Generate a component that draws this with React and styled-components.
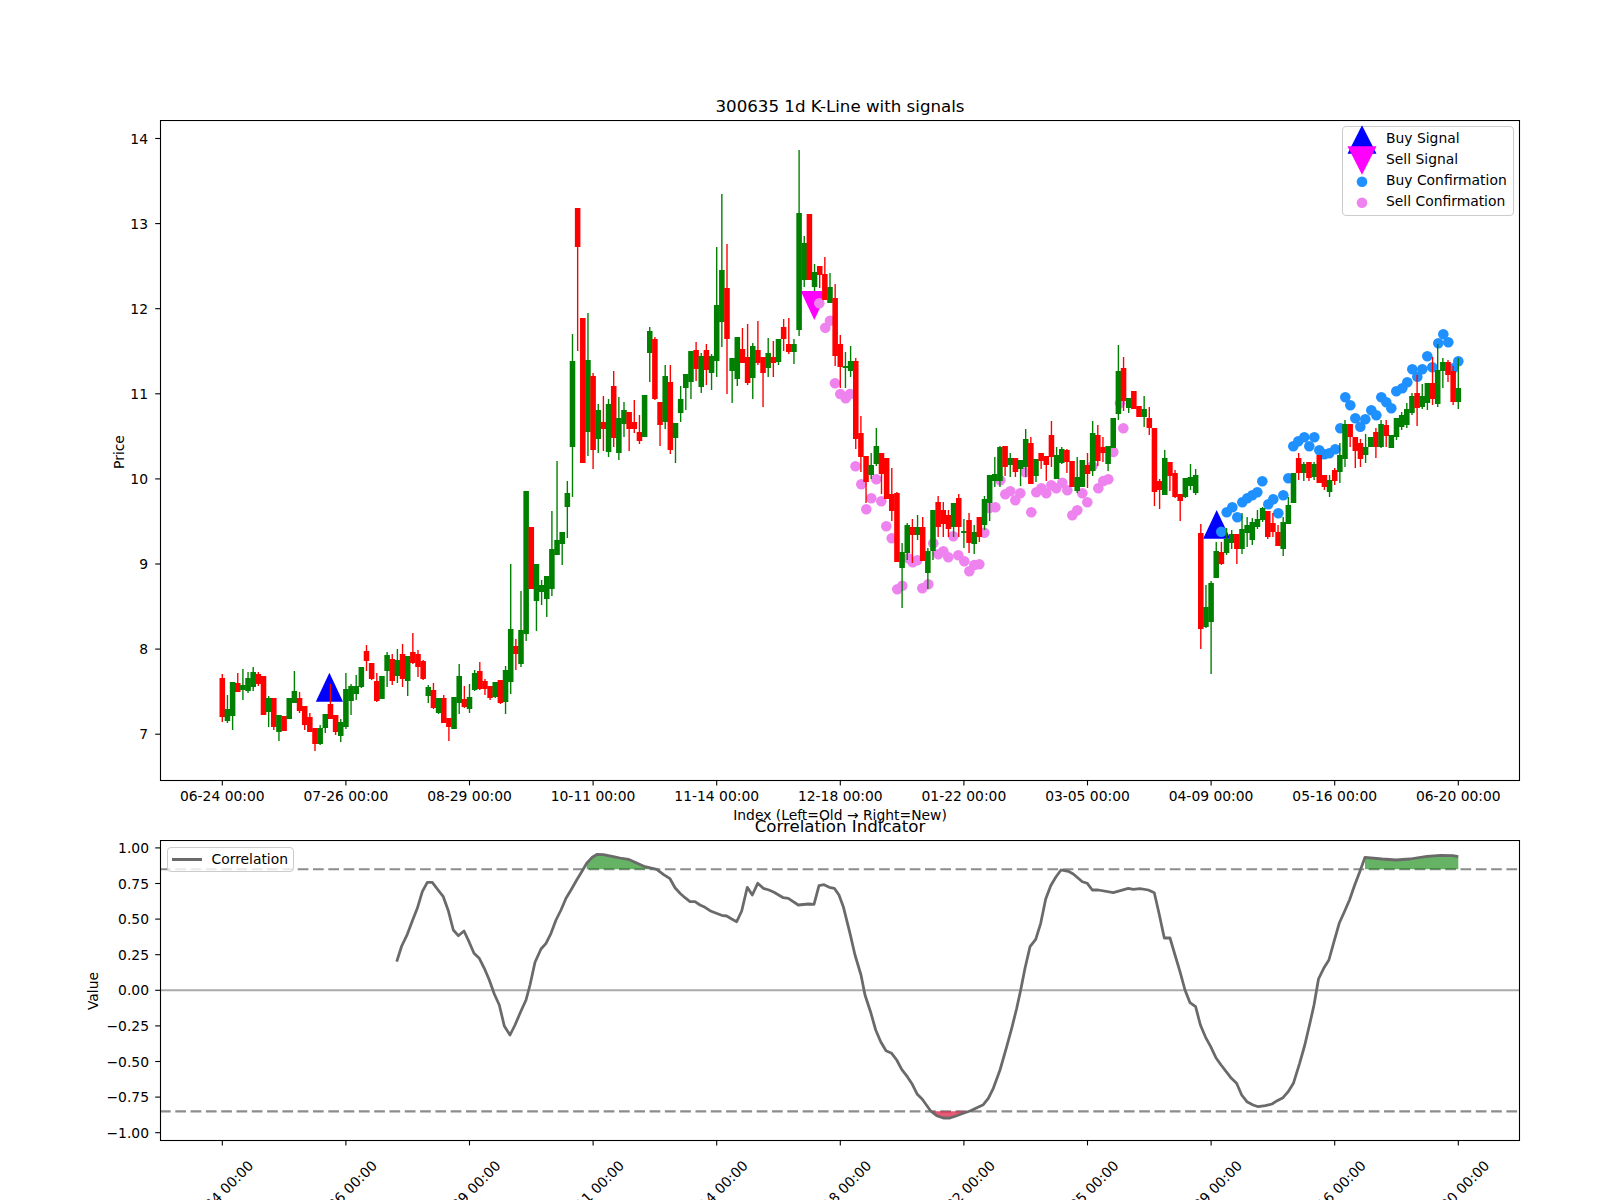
import React from 'react';
import styled, { createGlobalStyle } from 'styled-components';

const GlobalStyle = createGlobalStyle`
  html,
  body {
    margin: 0;
    background: #fff;
    font-family: 'DejaVu Sans', sans-serif;
    color: #000;
  }
`;

const Page = styled.div`
  width: 1600px;
  height: 1200px;
  padding-top: 95px;
  box-sizing: border-box;
  overflow: hidden;
  background: #fff;
`;
const Title = styled.div`
  height: 24px;
  margin: ${(p) => p.$top || 0}px 0 ${(p) => p.$bottom || 0}px 160px;
  width: 1360px;
  font-size: 16.67px;
  line-height: 24px;
  text-align: center;
`;
const AxisCaption = styled.div`
  height: 18px;
  margin-left: 160px;
  width: 1360px;
  font-size: 13.89px;
  line-height: 18px;
  text-align: center;
`;
const ChartWrap = styled.div`
  position: relative;
`;
const Chart = styled.svg`
  display: block;
  overflow: hidden;
`;
const Label = styled.text`
  font-family: 'DejaVu Sans', sans-serif;
  font-size: 13.89px;
  fill: #000;
`;
const Legend = styled.div`
  position: absolute;
  box-sizing: border-box;
  background: rgba(255, 255, 255, 0.8);
  border: 1px solid #ccc;
  border-radius: 4px;
  font-size: 13.89px;
`;
const SignalLegend = styled(Legend)`
  top: 6px;
  left: 1342px;
  width: 172px;
  height: 90px;
  padding-bottom: 4px;
`;
const LegendRow = styled.div`
  display: flex;
  align-items: center;
  height: 21px;
  white-space: nowrap;
`;
const Swatch = styled.svg`
  width: 38px;
  height: 21px;
  margin-right: 5px;
  flex: none;
  overflow: visible;
`;
const CorrLegend = styled(Legend)`
  top: 6.5px;
  left: 166.5px;
  width: 127.5px;
  height: 25px;
  display: flex;
  align-items: center;
  padding-left: 4px;
`;
const LegendLine = styled.span`
  width: 30px;
  height: 3px;
  margin-right: 10px;
  background: #6a6a6a;
`;

const X0 = 222.3;
const STEP = 5.15;
const TICK_STEP = 123.6;
const DATES = ['06-24', '07-26', '08-29', '10-11', '11-14', '12-18', '01-22', '03-05', '04-09', '05-16', '06-20'];
const PRICE_TICKS = [7, 8, 9, 10, 11, 12, 13, 14];
const VALUE_TICKS = ['1.00', '0.75', '0.50', '0.25', '0.00', '−0.25', '−0.50', '−0.75', '−1.00'];

const priceY = (p) => 734.2 - (p - 7) * 85.1;
const valueY = (v) => 990.3 - v * 142.4;

// colour, body top, body bottom, wick top, wick bottom (page px)
const CANDLES = `
r 678 717 674 722,g 709 721 695 723,g 682 716 682 730,r 683 692 673 692,g 685 690 669 700
g 678 691 672 693,g 672 687 667 691,r 674 684 672 686,r 676 715 676 715,g 698 712 696 727
r 698 727 698 730,g 715 732 715 741,r 716 731 716 731,g 698 719 698 719,g 691 703 671 703
r 698 711 692 713,r 706 725 706 730,r 717 732 713 732,r 728 744 728 751,g 728 744 725 745
g 714 728 714 733,r 704 719 684 719,r 715 732 715 735,g 722 736 719 742,g 689 727 673 729
g 686 701 684 715,g 686 694 675 700,g 667 687 667 688,r 651 661 645 671,r 663 679 663 680
r 681 701 673 702,g 676 699 676 699,g 655 671 652 687,r 659 681 654 685,g 660 676 649 683
r 654 679 644 687,g 656 681 656 696,r 652 663 633 664,r 654 667 650 677,r 661 679 660 680
g 687 696 685 703,r 690 708 683 709,g 698 713 698 714,r 698 723 695 723,r 718 727 718 741
g 697 729 697 729,g 676 703 664 714,r 699 707 686 708,g 697 709 684 713,g 673 690 670 691
r 671 689 662 690,r 681 689 679 695,r 686 698 686 700,g 682 697 682 698,r 680 703 680 704
g 670 702 666 714,g 629 682 564 694,r 646 654 639 670,g 630 664 591 667,g 491 634 491 641
r 527 589 527 589,g 564 601 564 631,g 585 592 580 605,g 576 599 576 617,g 549 589 511 596
g 540 555 461 555,g 532 544 532 565,g 493 507 481 538,g 361 447 334 497,r 208 247 208 351
r 318 463 318 463,g 360 432 313 456,r 376 450 373 469,g 410 439 404 453,r 422 429 396 451
g 404 452 399 457,r 386 438 371 447,g 418 453 397 460,g 410 424 402 437,r 412 429 412 451
r 422 429 400 433,r 432 441 415 444,g 395 437 395 437,g 331 353 327 382,r 339 399 337 400
r 402 425 402 446,g 376 422 365 429,r 382 450 365 454,g 423 438 423 463,g 399 413 386 422
g 374 388 374 410,g 351 382 351 399,r 350 369 342 381,g 356 387 353 393,r 350 370 344 385
g 356 373 354 390,g 305 361 247 377,g 270 322 194 347,r 288 339 244 394,g 358 371 358 403
g 337 379 337 386,r 349 363 328 363,r 357 383 324 385,g 346 378 343 399,r 350 363 321 365
r 357 373 357 407,g 353 368 338 377,r 357 363 341 377,g 339 362 339 365,r 327 339 319 351
r 344 352 318 354,g 344 352 339 364,g 213 330 150 336,g 243 280 236 287,r 214 280 214 280
g 272 287 264 291,r 266 275 266 288,r 274 300 257 300,g 287 303 273 303,r 298 356 284 366
r 344 367 335 388,g 366 368 352 388,g 361 371 346 377,r 361 439 358 449,r 433 457 416 472
r 456 482 456 503,g 465 475 453 479,g 446 464 428 466,r 453 474 453 494,r 458 499 458 499
r 494 511 468 521,r 493 562 492 562,g 552 568 543 608,g 525 553 523 560,r 527 535 519 563
g 527 535 515 540,r 527 561 517 561,g 551 573 548 589,g 510 551 510 560,r 502 527 496 537
r 510 524 502 537,r 515 529 510 537,g 503 527 503 537,r 498 527 494 537,g 531 533 519 548
r 520 543 513 553,g 532 544 525 554,r 517 537 517 542,g 499 525 496 530,g 475 503 475 521
g 474 481 457 487,g 447 481 446 487,r 446 467 446 476,g 458 465 453 477,r 458 472 458 477
g 460 469 460 486,g 439 467 429 477,r 443 484 437 484,g 459 476 459 482,r 453 461 453 469
r 456 465 456 481,r 435 457 421 467,g 455 479 447 479,g 449 463 447 464,r 450 462 449 473
r 461 487 461 487,g 477 491 457 493,g 460 487 460 487,r 465 474 453 488,g 433 471 421 476
r 435 461 425 466,r 447 453 437 462,g 446 464 446 471,g 418 448 418 448,g 371 414 345 420
r 368 401 357 411,g 398 408 398 413,r 391 409 391 409,r 406 417 406 417,g 409 417 396 427
r 418 428 407 435,r 428 492 428 506,r 481 490 479 509,g 458 495 450 495,r 462 476 462 491
r 473 497 470 498,r 494 501 494 521,g 478 497 478 498,g 477 486 464 490,g 475 493 469 495
r 533 629 524 649,g 607 627 585 628,g 583 622 581 674,g 551 578 542 578,r 552 564 542 565
g 539 553 528 555,g 534 543 530 549,r 534 549 534 564,g 529 549 513 554,g 525 533 517 547
g 522 540 518 545,g 519 527 510 529,g 508 520 507 522,r 511 537 511 539,r 523 532 513 537
r 532 546 525 546,g 522 549 517 556,g 505 524 497 524,g 473 503 473 503,r 458 473 453 480
g 464 473 462 481,r 462 478 462 481,g 464 477 462 480,r 455 483 455 483,r 475 487 475 490
g 480 492 475 497,r 470 481 468 485,g 455 472 443 483,g 424 459 420 467,r 424 437 424 447
r 437 451 437 468,r 443 459 439 467,g 447 455 434 463,g 437 447 437 447,r 432 447 428 458
g 424 447 420 448,r 425 436 420 447,g 435 448 435 448,g 418 437 418 440,g 415 427 412 430
g 409 425 403 428,g 396 413 393 415,r 393 408 375 426,g 396 407 384 409,g 383 403 383 410
r 383 399 357 405,g 370 404 344 407,g 362 371 358 388,r 362 375 360 382,r 371 402 366 405
g 388 402 358 409`
  .trim()
  .split(/[,\n]/)
  .map((row) => {
    const [c, ...n] = row.split(' ');
    return { color: c === 'g' ? '#008000' : '#ff0000', nums: n.map(Number) };
  });

const SELL_DOTS = [
  [819.3, 303.3], [825.3, 327.7], [830, 320.7], [835, 383.3], [840.3, 394], [845.7, 398.3], [850, 394], [855.5, 466.3],
  [861.3, 484.3], [866.3, 509.3], [871.3, 498.3], [876.3, 479.3], [881.3, 501.3], [886.3, 526.3], [891.7, 538.3],
  [897.3, 589.3], [902.3, 585.7], [908.3, 558.3], [912.7, 562.3], [917.3, 560.3], [922.3, 588.3], [928.3, 584.3],
  [933.3, 543.3], [938.3, 554.3], [943.3, 551.3], [948.3, 557.3], [953.3, 536.3], [958.3, 555.3], [964.3, 561.3],
  [969.3, 571.3], [974.3, 565], [979.3, 564.3], [984.3, 532.7], [989.3, 508], [995.3, 507.3], [1000.3, 480.3],
  [1005.3, 494.3], [1010.3, 491.3], [1015.3, 500.3], [1020.3, 493.3], [1025.3, 472.3], [1031.3, 512.3], [1036.3, 492.3],
  [1041.3, 488.3], [1046.3, 493.3], [1051.3, 485.3], [1056.3, 488.3], [1062.3, 482.7], [1067.3, 490.3], [1072.3, 515.3],
  [1077.3, 510.3], [1082.3, 493.3], [1087.3, 502.3], [1092.3, 466.3], [1098.3, 488.3], [1103.3, 481], [1108.3, 479.3],
  [1113.3, 452], [1120, 403.3], [1123.3, 428.3],
];

const BUY_DOTS = [
  [1221.3, 531.7], [1226.7, 512.3], [1232.3, 507.3], [1237.3, 517.3], [1242.3, 502.3], [1247.3, 498.3], [1252.3, 495.3],
  [1257.3, 492.3], [1262.3, 481.3], [1268.3, 504.3], [1273.3, 499.3], [1278.3, 513.3], [1283.3, 495.3], [1288.3, 478.3],
  [1293.3, 446.3], [1298.3, 441.3], [1304.3, 437.3], [1309.3, 446.3], [1314.3, 437.3], [1319.3, 450.3], [1324.3, 454.3],
  [1329.3, 453.3], [1335.3, 449.3], [1340.3, 428.3], [1345.3, 397.3], [1350.3, 405.3], [1355.3, 418.3], [1360.3, 426.7],
  [1365.3, 419.3], [1371.3, 410.3], [1376.3, 415.3], [1381.3, 397.3], [1386.3, 402.3], [1391.3, 408.3], [1396.3, 391.3],
  [1402.3, 388.3], [1407.3, 382.3], [1412.3, 369.3], [1417.3, 376.7], [1422.3, 369.3], [1427.3, 356.3], [1432.3, 367.3],
  [1438.3, 343.3], [1443.3, 334.3], [1448.3, 342.3], [1453.3, 368.3], [1458.3, 361.3],
];

const CORR = [
  [396.7, 961.7], [401.7, 946], [407.3, 934.3], [412.3, 921], [417.3, 908.3], [422.3, 891.7], [427.3, 882.3], [432.3, 882.3],
  [437.3, 889], [443.3, 896.7], [448.3, 910.7], [453.3, 930], [458.3, 935.7], [464, 931], [469, 941.7], [474, 953.3],
  [479.3, 958.3], [484.3, 968.3], [489.3, 980], [494.3, 994], [499.3, 1005], [504.3, 1026], [510, 1035], [515, 1025],
  [520, 1013.3], [526, 1000], [530, 985], [535, 962.3], [541, 949], [546, 943.3], [551, 933.3], [556, 920], [561, 910],
  [566, 898.3], [571, 890], [576.7, 880], [581.7, 871.7], [586.7, 863.3], [592.3, 857.3], [597.3, 854.3], [603.3, 854.7],
  [613.3, 856.7], [620, 858], [628.3, 859.3], [635, 862.3], [645, 866.7], [656.7, 869.3], [663.3, 874.3], [670, 878.7],
  [675, 887.7], [680, 893.3], [685, 897.7], [690, 901.7], [695, 901.7], [700, 905], [705, 907.3], [710, 910.7], [715, 912.7],
  [721.7, 915.3], [726.7, 916], [731.7, 919], [736.7, 921.7], [741.7, 911], [747.3, 887.3], [752.3, 895], [757.7, 883.3],
  [763.3, 888.3], [769, 890], [774, 892.3], [783.3, 897.7], [788.3, 898.3], [798.3, 905], [808.3, 904], [814, 904.3],
  [819, 885.7], [824, 884.7], [829.3, 887.3], [834.3, 888.3], [839, 895], [843.3, 906.7], [850, 933.3], [855, 955],
  [861, 975], [865, 995], [871, 1013.3], [875.7, 1030], [880.7, 1041.7], [886, 1050.7], [891.7, 1053.3], [896.7, 1060],
  [901.7, 1069.3], [907.3, 1076.7], [912.3, 1084.3], [917.3, 1094.3], [922.3, 1099.3], [930.7, 1111], [936.7, 1115.7],
  [943.3, 1118], [950, 1118], [956.7, 1115.7], [963.3, 1113.3], [970, 1111], [983.3, 1104.7], [988.3, 1098.3], [993.3, 1088.3],
  [1000, 1070], [1006.7, 1046.7], [1011.7, 1028.3], [1016.7, 1008.3], [1020.7, 990], [1025, 968.3], [1030, 946.7],
  [1035.7, 939.3], [1040.7, 923.3], [1045.7, 899], [1050.7, 885.7], [1055.7, 877.3], [1061, 870], [1068.3, 871.3],
  [1073.3, 874], [1082.3, 881.7], [1087.3, 883.3], [1092.3, 890], [1098.3, 890], [1113.3, 892.7], [1128.3, 888.3],
  [1133.3, 889.3], [1140, 888.7], [1148.3, 890], [1154.3, 892.7], [1159, 913.3], [1164.3, 938], [1170, 938], [1175, 955],
  [1180, 971.7], [1185, 990], [1190, 1002.7], [1195.6, 1006.7], [1200.4, 1025], [1205.6, 1037.3], [1210.7, 1046.7],
  [1215.9, 1057.7], [1221.1, 1065], [1226.2, 1071.7], [1231.4, 1078.3], [1236.6, 1083.3], [1241.7, 1095], [1246.9, 1101.7],
  [1253.1, 1105], [1258.3, 1106.7], [1265.2, 1105.7], [1272, 1104], [1277.2, 1100.7], [1283, 1097.7], [1288.2, 1091.7],
  [1293.4, 1083.3], [1299.6, 1063.3], [1304.8, 1045], [1309.9, 1023.3], [1314, 1005], [1318.5, 979], [1323.7, 968.3],
  [1328.9, 960], [1334, 941.7], [1339.2, 923.3], [1344.4, 911.7], [1349.5, 900], [1354.7, 885], [1359.8, 871.7],
  [1365, 857.3], [1382.2, 859], [1396, 860], [1409.8, 859], [1427, 856.3], [1440.8, 855.3], [1452.8, 855.7], [1458.3, 856.7],
];

const toPoints = (pts) => pts.map((p) => p.join(',')).join(' ');

// closed area between the curve and a threshold line, for the curve part in [from, to]
const band = (from, to, base) => {
  const part = CORR.filter(([x]) => x >= from && x <= to);
  return toPoints([[part[0][0], base], ...part, [part[part.length - 1][0], base]]);
};

const tickX = (i) => X0 + TICK_STEP * i;

function XTicks({ y }) {
  return DATES.map((_, i) => <line key={i} x1={tickX(i)} x2={tickX(i)} y1={y} y2={y + 4.9} stroke="#000" strokeWidth="1.1" />);
}

function PriceChart() {
  return (
    <Chart width="1600" height="686" viewBox="0 120 1600 686">
      <polygon points="329.4,672.7 343,701.7 315.8,701.7" fill="#0000ff" />
      <polygon points="1216.7,510 1230.3,538.7 1203.1,538.7" fill="#0000ff" />
      <polygon points="800.7,291 828,291 814.3,320" fill="#ff00ff" />
      {SELL_DOTS.map(([x, y], i) => (
        <circle key={i} cx={x} cy={y} r="5.3" fill="#ee82ee" />
      ))}
      {BUY_DOTS.map(([x, y], i) => (
        <circle key={i} cx={x} cy={y} r="5.3" fill="#1e90ff" />
      ))}
      {CANDLES.map(({ color, nums: [bodyTop, bodyBottom, wickTop, wickBottom] }, i) => {
        const x = X0 + STEP * i;
        return (
          <g key={i} stroke={color}>
            <line x1={x} x2={x} y1={wickTop} y2={wickBottom} strokeWidth="1.39" />
            <line x1={x} x2={x} y1={bodyTop} y2={bodyBottom} strokeWidth="5.56" />
          </g>
        );
      })}
      <rect x="160.5" y="120.5" width="1359" height="660" fill="none" stroke="#000" strokeWidth="1.1" />
      {PRICE_TICKS.map((p) => (
        <g key={p}>
          <line x1="155.2" x2="160" y1={priceY(p)} y2={priceY(p)} stroke="#000" strokeWidth="1.1" />
          <Label x="148" y={priceY(p) + 5} textAnchor="end">
            {p}
          </Label>
        </g>
      ))}
      <XTicks y={780.5} />
      {DATES.map((d, i) => (
        <Label key={d + i} x={tickX(i)} y="801" textAnchor="middle">
          {d} 00:00
        </Label>
      ))}
      <Label x="124" y="452" textAnchor="middle" transform="rotate(-90 124 452)">
        Price
      </Label>
    </Chart>
  );
}

function CorrelationChart() {
  return (
    <Chart width="1600" height="360" viewBox="0 840 1600 360">
      <line x1="160" x2="1520" y1={valueY(0)} y2={valueY(0)} stroke="#aaa" strokeWidth="2" />
      <line x1="160" x2="1520" y1={valueY(0.85)} y2={valueY(0.85)} stroke="#8c8c8c" strokeWidth="2.08" strokeDasharray="10.7 4.6" />
      <line x1="160" x2="1520" y1={valueY(-0.85)} y2={valueY(-0.85)} stroke="#8c8c8c" strokeWidth="2.08" strokeDasharray="10.7 4.6" />
      <polygon points={band(586, 657, valueY(0.85))} fill="#008000" fillOpacity="0.6" />
      <polygon points={band(1364, 1459, valueY(0.85))} fill="#008000" fillOpacity="0.6" />
      <polygon points={band(930, 971, valueY(-0.85))} fill="#dc143c" fillOpacity="0.7" />
      <polyline points={toPoints(CORR)} fill="none" stroke="#6a6a6a" strokeWidth="2.78" strokeLinejoin="round" />
      <rect x="160.5" y="840.5" width="1359" height="300" fill="none" stroke="#000" strokeWidth="1.1" />
      {VALUE_TICKS.map((t, i) => {
        const y = valueY(1 - i * 0.25);
        return (
          <g key={t}>
            <line x1="155.2" x2="160" y1={y} y2={y} stroke="#000" strokeWidth="1.1" />
            <Label x="149" y={y + 5} textAnchor="end">
              {t}
            </Label>
          </g>
        );
      })}
      <XTicks y={1140.5} />
      {DATES.map((d, i) => (
        <Label key={d + i} x={tickX(i) - 1.5} y="1198" textAnchor="middle" transform={`rotate(-45 ${tickX(i) - 1.5} 1193)`}>
          {d} 00:00
        </Label>
      ))}
      <Label x="98" y="991" textAnchor="middle" transform="rotate(-90 98 991)">
        Value
      </Label>
    </Chart>
  );
}

export default function App() {
  return (
    <>
      <GlobalStyle />
      <Page>
        <Title $bottom={1}>300635 1d K-Line with signals</Title>
        <ChartWrap>
          <PriceChart />
          <SignalLegend>
            <LegendRow>
              <Swatch viewBox="0 0 38 21">
                <polygon points="19,-1.8 33.5,26.8 4.5,26.8" fill="#0000ff" />
              </Swatch>
              Buy Signal
            </LegendRow>
            <LegendRow>
              <Swatch viewBox="0 0 38 21">
                <polygon points="4.5,-1.8 33.5,-1.8 19,26.8" fill="#ff00ff" />
              </Swatch>
              Sell Signal
            </LegendRow>
            <LegendRow>
              <Swatch viewBox="0 0 38 21">
                <circle cx="19" cy="12.8" r="5.3" fill="#1e90ff" />
              </Swatch>
              Buy Confirmation
            </LegendRow>
            <LegendRow>
              <Swatch viewBox="0 0 38 21">
                <circle cx="19" cy="12.8" r="5.3" fill="#ee82ee" />
              </Swatch>
              Sell Confirmation
            </LegendRow>
          </SignalLegend>
        </ChartWrap>
        <AxisCaption>Index (Left=Old → Right=New)</AxisCaption>
        <Title $top={-9} $bottom={1}>Correlation Indicator</Title>
        <ChartWrap>
          <CorrelationChart />
          <CorrLegend>
            <LegendLine />
            Correlation
          </CorrLegend>
        </ChartWrap>
      </Page>
    </>
  );
}
